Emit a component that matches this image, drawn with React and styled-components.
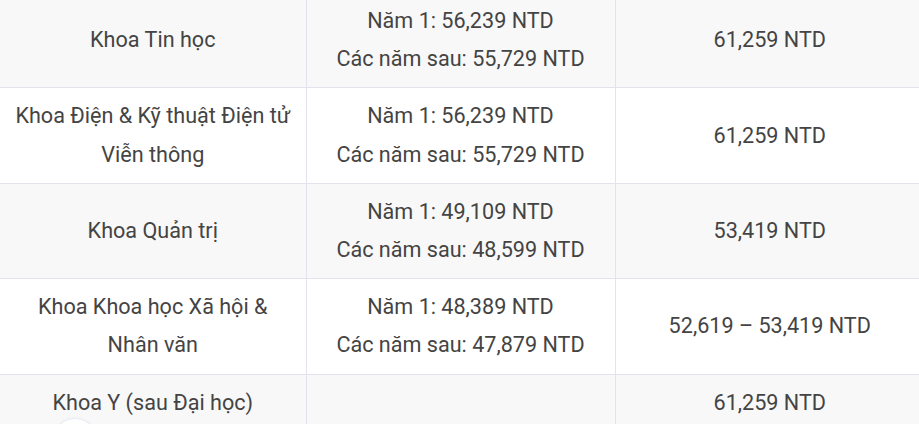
import styled, { createGlobalStyle } from 'styled-components'

const GlobalStyle = createGlobalStyle`
  html, body {
    margin: 0;
    padding: 0;
    background: #fff;
    overflow: hidden;
  }
  body {
    font-family: Roboto, "Noto Sans", sans-serif;
  }
`

const Page = styled.div`
  width: 919px;
  height: 424px;
  overflow: hidden;
  position: relative;
`

const Table = styled.table`
  margin-top: -8px;
  width: 925px;
  border-collapse: collapse;
  table-layout: fixed;
  color: #444;
  font-size: 21.6px;
  line-height: 38.2px;
`

const Row = styled.tr`
  background: ${({ $shaded }) => ($shaded ? '#f8f8f8' : '#fff')};
`

const Cell = styled.td`
  border: 1px solid #e3e3f0;
  padding: 9px 12px;
  text-align: center;
  vertical-align: middle;

  &:first-child {
    border-left: none;
  }
`

const Floating = styled.div`
  position: absolute;
  left: 54px;
  top: 419px;
  width: 42px;
  height: 42px;
  border-radius: 50%;
  background: #fff;
  box-shadow: 0 0 3px rgba(120, 140, 220, 0.3);
`

const rows = [
  {
    name: 'Khoa Tin học',
    fee: ['Năm 1: 56,239 NTD', 'Các năm sau: 55,729 NTD'],
    total: '61,259 NTD',
  },
  {
    name: 'Khoa Điện & Kỹ thuật Điện tử Viễn thông',
    fee: ['Năm 1: 56,239 NTD', 'Các năm sau: 55,729 NTD'],
    total: '61,259 NTD',
  },
  {
    name: 'Khoa Quản trị',
    fee: ['Năm 1: 49,109 NTD', 'Các năm sau: 48,599 NTD'],
    total: '53,419 NTD',
  },
  {
    name: 'Khoa Khoa học Xã hội & Nhân văn',
    fee: ['Năm 1: 48,389 NTD', 'Các năm sau: 47,879 NTD'],
    total: '52,619 – 53,419 NTD',
  },
  {
    name: 'Khoa Y (sau Đại học)',
    fee: [],
    total: '61,259 NTD',
  },
]

export default function App() {
  return (
    <Page>
      <GlobalStyle />
      <Table>
        <colgroup>
          <col style={{ width: 306 }} />
          <col style={{ width: 309 }} />
          <col />
        </colgroup>
        <tbody>
          {rows.map((r, i) => (
            <Row key={r.name} $shaded={i % 2 === 0}>
              <Cell>{r.name}</Cell>
              <Cell>
                {r.fee.map((line, j) => (
                  <div key={j}>{line}</div>
                ))}
              </Cell>
              <Cell>{r.total}</Cell>
            </Row>
          ))}
        </tbody>
      </Table>
      <Floating />
    </Page>
  )
}
